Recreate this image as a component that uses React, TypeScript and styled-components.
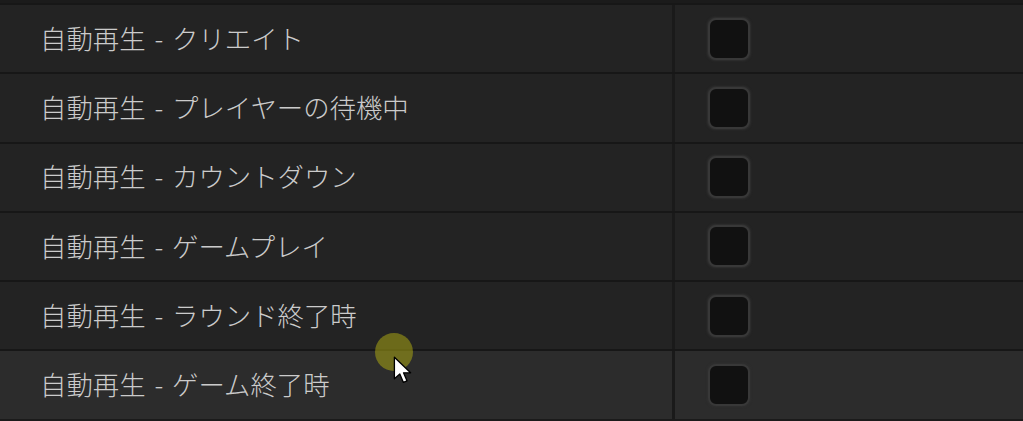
import React from "react";
import styled, { createGlobalStyle } from "styled-components";

const GlobalStyle = createGlobalStyle`
  html, body {
    margin: 0;
    padding: 0;
    background: #1b1b1b;
    overflow: hidden;
  }
  body {
    font-family: "Noto Sans CJK JP", "Noto Sans", sans-serif;
  }
`;

const Page = styled.div`
  position: relative;
  width: 1023px;
  height: 421px;
  background: #1b1b1b;
  padding-top: 3px;
  box-sizing: border-box;
`;

const Table = styled.div`
  display: flex;
  flex-direction: column;
`;

const Row = styled.div<{ $hover?: boolean }>`
  display: flex;
  height: 67.25px;
  border-top: 2px solid #171717;
  background: ${(p) => (p.$hover ? "#2c2c2c" : "#232323")};
`;

const LabelCell = styled.div`
  width: 675px;
  flex: none;
  display: flex;
  align-items: center;
  padding-left: 40px;
  padding-bottom: 1px;
  box-sizing: border-box;
  border-right: 3px solid #1a1a1a;
  color: #cbcbcb;
  font-size: 26.4px;
  font-weight: 300;
  word-spacing: 3px;
  line-height: 1;
  white-space: nowrap;
`;

const ValueCell = styled.div`
  flex: 1;
  display: flex;
  align-items: center;
  padding-left: 33px;
`;

const Checkbox = styled.div`
  width: 42px;
  height: 42px;
  box-sizing: border-box;
  border-radius: 8px;
  background: #111111;
  border: 2px solid #383838;
  box-shadow: 0 0 2px 0.5px #303030;
`;

const Highlight = styled.div`
  position: absolute;
  left: 375px;
  top: 333px;
  width: 38px;
  height: 38px;
  border-radius: 50%;
  background: rgba(170, 165, 20, 0.55);
  pointer-events: none;
`;

const Cursor = styled.svg`
  position: absolute;
  left: 392px;
  top: 356px;
  width: 24px;
  height: 30px;
  pointer-events: none;
`;

const labels = [
  "自動再生 - クリエイト",
  "自動再生 - プレイヤーの待機中",
  "自動再生 - カウントダウン",
  "自動再生 - ゲームプレイ",
  "自動再生 - ラウンド終了時",
  "自動再生 - ゲーム終了時",
];

export default function App() {
  return (
    <>
      <GlobalStyle />
      <Page>
        <Table>
          {labels.map((l, i) => (
            <Row key={l} $hover={i === labels.length - 1}>
              <LabelCell>{l}</LabelCell>
              <ValueCell>
                <Checkbox />
              </ValueCell>
            </Row>
          ))}
        </Table>
        <Highlight />
        <Cursor viewBox="0 0 20 25">
          <path
            d="M2 1 L2 19 L6.5 15 L9.5 22 L12.5 20.7 L9.6 14 L15.5 14 Z"
            fill="#ffffff"
            stroke="#000000"
            strokeWidth="1.1"
            strokeLinejoin="round"
          />
        </Cursor>
      </Page>
    </>
  );
}
